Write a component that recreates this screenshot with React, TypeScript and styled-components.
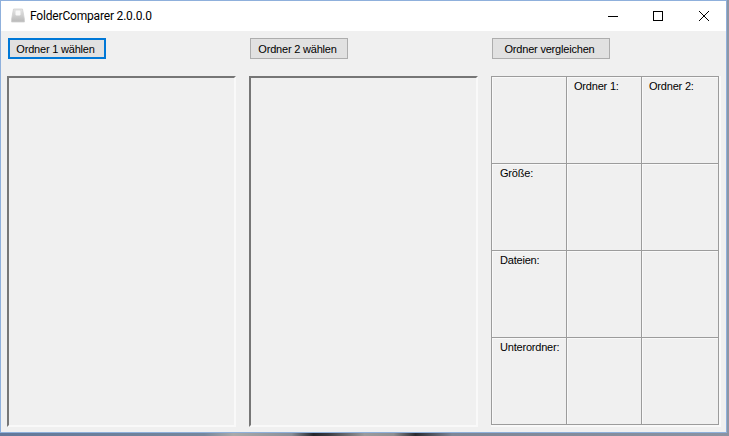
import React from 'react';
import styled, { createGlobalStyle } from 'styled-components';

const GlobalStyle = createGlobalStyle`
  html, body {
    margin: 0;
    padding: 0;
    overflow: hidden;
  }
`;

const Screen = styled.div`
  width: 729px;
  height: 436px;
  background: #8d97a6;
  overflow: hidden;
`;

const Window = styled.div`
  width: 727px;
  height: 433px;
  box-sizing: border-box;
  border: 1px solid #8fb0dc;
  display: flex;
  flex-direction: column;
  background: #f0f0f0;
`;

const Desktop = styled.div`
  height: 3px;
  background: linear-gradient(
    90deg,
    #62789a 0%,
    #76879c 28%,
    #a9a9a9 32%,
    #8a8f98 40%,
    #25262c 43%,
    #3a3a40 45%,
    #9a9a9c 50%,
    #8f8f92 54%,
    #2a2a30 57%,
    #7e8696 62%,
    #8b93a2 100%
  );
`;

const TitleBar = styled.div`
  height: 30px;
  flex: none;
  background: #fff;
  display: flex;
  align-items: center;
`;

const AppIcon = styled.svg`
  width: 16px;
  height: 15px;
  margin: 0 4px 1px 9px;
`;

const Title = styled.span`
  font-family: Roboto, sans-serif;
  font-size: 12px;
  letter-spacing: -0.18px;
  color: #000;
  flex: 1;
`;

const CaptionButton = styled.div<{ $nudged?: boolean }>`
  width: 45px;
  height: 30px;
  box-sizing: border-box;
  padding-right: ${({ $nudged }) => ($nudged ? 2 : 0)}px;
  display: flex;
  align-items: center;
  justify-content: center;
`;

const Content = styled.div`
  flex: 1;
  display: grid;
  grid-template-columns: 229px 229px 230px;
  column-gap: 13px;
  grid-template-rows: 22px 351px;
  row-gap: 16px;
  padding: 7px 0 0 6px;
`;

const ActionButton = styled.button<{ $width: number; $focused?: boolean }>`
  width: ${({ $width }) => $width}px;
  height: 21px;
  box-sizing: border-box;
  margin: 0 0 0 1px;
  padding: 0 3px 0 0;
  background: #e1e1e1;
  border: ${({ $focused }) => ($focused ? '2px solid #0078d7' : '1px solid #adadad')};
  font-family: 'Liberation Sans', sans-serif;
  font-size: 11px;
  letter-spacing: -0.2px;
  color: #000;
  display: flex;
  align-items: center;
  justify-content: center;
`;

const ListPanel = styled.div`
  box-sizing: border-box;
  background: #f0f0f0;
  border-style: solid;
  border-width: 2px;
  border-color: #767676 #f9f9f9 #f9f9f9 #767676;
`;

const StatsTable = styled.div`
  box-sizing: border-box;
  display: grid;
  grid-template-columns: 74px 74px 76px;
  grid-template-rows: repeat(4, 86px);
  gap: 1px;
  padding: 1px;
  background: #9c9c9c;
  border-style: solid;
  border-width: 0 2px 2px 0;
  border-color: #f9f9f9;
`;

const Cell = styled.div<{ $label?: boolean }>`
  background: #f0f0f0;
  border-top: 1px solid #f9f9f9;
  border-left: 1px solid #f9f9f9;
  font-family: 'Liberation Sans', sans-serif;
  font-size: 11px;
  letter-spacing: -0.2px;
  color: #000;
  padding: 2px 0 0 ${({ $label }) => ($label ? 7 : 6)}px;
  white-space: nowrap;
`;

const cells = ['', 'Ordner 1:', 'Ordner 2:', 'Größe:', '', '', 'Dateien:', '', '', 'Unterordner:', '', ''];

const App = () => (
  <Screen>
    <GlobalStyle />
    <Window>
      <TitleBar>
        <AppIcon viewBox="0 0 16 15">
          <defs>
            <linearGradient id="drive" x1="0" y1="0" x2="0" y2="1">
              <stop offset="0" stopColor="#e6e6e6" />
              <stop offset="1" stopColor="#b8b8b8" />
            </linearGradient>
          </defs>
          <path d="M3.5 1h9l2 10.500v2.500h-13v-2.500z" fill="url(#drive)" stroke="#d0d0d0" strokeWidth="0.8" />
          <rect x="5.500" y="2.500" width="5" height="5" rx="1.200" fill="#f8f8f8" />
        </AppIcon>
        <Title>FolderComparer 2.0.0.0</Title>
        <CaptionButton $nudged>
          <svg width="10" height="10" viewBox="0 0 10 10"><path d="M0 5.500h10" stroke="#000" /></svg>
        </CaptionButton>
        <CaptionButton $nudged>
          <svg width="10" height="10" viewBox="0 0 10 10"><rect x="0.500" y="0.500" width="9" height="9" fill="none" stroke="#000" /></svg>
        </CaptionButton>
        <CaptionButton>
          <svg width="10" height="10" viewBox="0 0 10 10"><path d="M0 0l10 10M10 0L0 10" stroke="#000" /></svg>
        </CaptionButton>
      </TitleBar>
      <Content>
        <ActionButton $width={98} $focused>Ordner 1 wählen</ActionButton>
        <ActionButton $width={98}>Ordner 2 wählen</ActionButton>
        <ActionButton $width={118}>Ordner vergleichen</ActionButton>
        <ListPanel />
        <ListPanel />
        <StatsTable>
          {cells.map((text, index) => (
            <Cell key={index} $label={index % 3 === 0}>{text}</Cell>
          ))}
        </StatsTable>
      </Content>
    </Window>
    <Desktop />
  </Screen>
);

export default App;
